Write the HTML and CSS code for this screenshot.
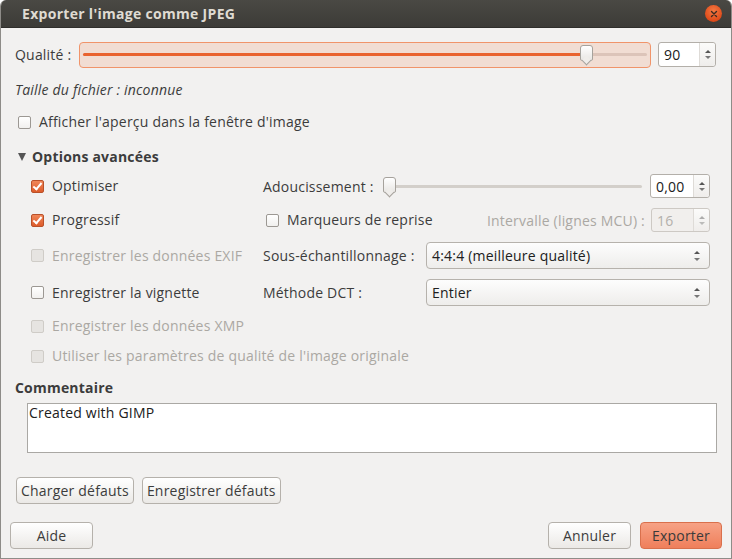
FILE: index.html
```html
<!DOCTYPE html>
<html lang="fr">
<head>
<meta charset="utf-8">
<title>Exporter l'image comme JPEG</title>
<link rel="stylesheet" href="styles.css">
</head>
<body>
<div class="window">
  <div class="titlebar">
    <span class="title">Exporter l'image comme JPEG</span>
    <span class="close"><svg width="16" height="16" viewBox="0 0 16 16"><path d="M5.5 5.5 L10.5 10.5 M10.5 5.5 L5.5 10.5" stroke="#3b2a22" stroke-width="1.4" stroke-linecap="round"/></svg></span>
  </div>
  <div class="content">
    <div class="quality-row">
      <span class="label">Qualité :</span>
      <div class="scale focused">
        <div class="trough"><div class="fill" style="width:504px"></div></div>
        <span class="thumb q-thumb"></span>
      </div>
      <div class="spin"><span class="val">90</span><span class="arrows"><i class="up"></i><i class="down"></i></span></div>
    </div>
    <div class="filesize">Taille du fichier : inconnue</div>
    <div class="check preview"><span class="box"></span><span>Afficher l'aperçu dans la fenêtre d'image</span></div>
    <div class="expander"><span class="tri"></span>Options avancées</div>
    <div class="advanced">
      <div class="check r1 c1"><span class="box checked"></span><span>Optimiser</span></div>
      <div class="r1 c2 smooth-row">
        <span class="label">Adoucissement :</span>
        <div class="scale plain">
          <div class="trough"></div>
          <span class="thumb s-thumb"></span>
        </div>
        <div class="spin"><span class="val">0,00</span><span class="arrows"><i class="up"></i><i class="down"></i></span></div>
      </div>

      <div class="check r2 c1"><span class="box checked"></span><span>Progressif</span></div>
      <div class="r2 c2 marker-row">
        <div class="check"><span class="box"></span><span>Marqueurs de reprise</span></div>
        <span class="label disabled interval">Intervalle (lignes MCU) :</span>
        <div class="spin disabled"><span class="val">16</span><span class="arrows"><i class="up"></i><i class="down"></i></span></div>
      </div>

      <div class="check disabled r3 c1"><span class="box"></span><span>Enregistrer les données EXIF</span></div>
      <div class="r3 c2 combo-row">
        <span class="label">Sous-échantillonnage :</span>
        <div class="combo"><span>4:4:4 (meilleure qualité)</span><span class="arrows"><i class="up"></i><i class="down"></i></span></div>
      </div>

      <div class="check r4 c1"><span class="box"></span><span>Enregistrer la vignette</span></div>
      <div class="r4 c2 combo-row">
        <span class="label">Méthode DCT :</span>
        <div class="combo"><span>Entier</span><span class="arrows"><i class="up"></i><i class="down"></i></span></div>
      </div>

      <div class="check disabled r5 c1"><span class="box"></span><span>Enregistrer les données XMP</span></div>
      <div class="check disabled r6 c1 wide"><span class="box"></span><span>Utiliser les paramètres de qualité de l'image originale</span></div>
    </div>
    <div class="section-title">Commentaire</div>
    <div class="textarea">Created with GIMP</div>
    <div class="defaults">
      <button class="btn">Charger défauts</button>
      <button class="btn">Enregistrer défauts</button>
    </div>
  </div>
  <div class="actions">
    <button class="btn help">Aide</button>
    <div class="right">
      <button class="btn cancel">Annuler</button>
      <button class="btn primary">Exporter</button>
    </div>
  </div>
</div>
</body>
</html>
```

FILE: styles.css
```css
html, body {
  margin: 0;
  padding: 0;
  background: #ffffff;
}
body {
  font-family: "Open Sans", "Noto Sans", "DejaVu Sans", sans-serif;
  font-size: 14px;
  letter-spacing: 0.2px;
  color: #3c3c3c;
}
.window {
  width: 732px;
  height: 559px;
  box-sizing: border-box;
  display: flex;
  flex-direction: column;
  background: #f2f1f0;
  border: 1px solid #8e8c88;
  border-top: none;
  border-radius: 6px 6px 0 0;
  overflow: hidden;
}
.titlebar {
  height: 28px;
  flex: none;
  display: flex;
  align-items: center;
  justify-content: space-between;
  padding: 0 9px 0 21px;
  background: linear-gradient(#4a4944, #3c3b37);
  border-bottom: 1px solid #2f2e2b;
  box-sizing: border-box;
}
.title {
  color: #dfdbd2;
  font-weight: bold;
  font-size: 14px;
  letter-spacing: 0.3px;
}
.close {
  width: 17px;
  height: 17px;
  border-radius: 50%;
  background: radial-gradient(circle at 50% 35%, #f47a44, #df4b1a 70%, #c23c0f);
  display: flex;
  align-items: center;
  justify-content: center;
}
.close svg { display: block; }
.content {
  flex: 1;
  padding: 14px 14px 0 14px;
}
.label { white-space: nowrap; }
.quality-row {
  display: flex;
  align-items: center;
  height: 25px;
}
.quality-row .label { width: 64px; flex: none; }
.scale { position: relative; box-sizing: border-box; }
.scale.focused {
  width: 572px;
  height: 26px;
  border: 1px solid #f0946a;
  border-radius: 4px;
  background: #f1ddd3;
}
.scale .trough {
  position: absolute;
  left: 3px;
  right: 3px;
  top: 10px;
  height: 3px;
  border-radius: 2px;
  background: #dcc4b9;
}
.scale .fill {
  height: 3px;
  border-radius: 2px;
  background: #e9632f;
}
.thumb {
  position: absolute;
  width: 11px;
  height: 14px;
  border: 1px solid #a6a29c;
  border-radius: 3px 3px 2px 2px;
  background: linear-gradient(#ffffff, #e8e6e3);
}
.thumb::after {
  content: "";
  position: absolute;
  left: 2px;
  bottom: -4px;
  width: 6px;
  height: 6px;
  background: #efedea;
  border-right: 1px solid #a6a29c;
  border-bottom: 1px solid #a6a29c;
  transform: rotate(45deg);
}
.q-thumb { left: 500px; top: 2px; }
.scale.plain {
  width: 262px;
  height: 23px;
  margin-left: 3px;
}
.scale.plain .trough { left: 3px; right: 0; top: 10px; background: #d3cfca; }
.s-thumb { left: 0; top: 2px; }
.spin {
  display: flex;
  align-items: stretch;
  box-sizing: border-box;
  height: 25px;
  border: 1px solid #b3afa9;
  border-radius: 3px;
  background: #ffffff;
  margin-left: 8px;
  flex: none;
}
.spin .val {
  flex: 1;
  display: flex;
  align-items: center;
  padding-left: 5px;
  color: #202020;
  font-size: 14px;
}
.spin .arrows {
  width: 15px;
  border-left: 1px solid #dedbd7;
  background: linear-gradient(#fbfbfa, #efedeb);
  border-radius: 0 3px 3px 0;
}
.arrows {
  display: flex;
  flex-direction: column;
  align-items: center;
  justify-content: center;
  gap: 3px;
}
.arrows i {
  display: block;
  width: 0;
  height: 0;
  border-left: 3px solid transparent;
  border-right: 3px solid transparent;
}
.arrows .up { border-bottom: 3px solid #555; }
.arrows .down { border-top: 3px solid #777; }
.quality-row .spin { width: 58px; margin-left: 7px; }
.filesize {
  margin-top: 15px;
  line-height: 16px;
  font-style: italic;
}
.check {
  display: flex;
  align-items: center;
  gap: 8px;
  line-height: 16px;
  white-space: nowrap;
}
.box {
  width: 11px;
  height: 11px;
  flex: none;
  border: 1px solid #9c9893;
  border-radius: 2px;
  background: linear-gradient(#ffffff, #f1f0ee);
  position: relative;
}
.box.checked {
  border-color: #b9512a;
  background: linear-gradient(#f08658, #dd5c2b);
}
.box.checked::after {
  content: "";
  position: absolute;
  left: 3px;
  top: 0px;
  width: 3px;
  height: 7px;
  border-right: 2px solid #ffffff;
  border-bottom: 2px solid #ffffff;
  transform: rotate(40deg);
}
.disabled { color: #aba8a3; }
.check.disabled .box {
  border-color: #cfccc7;
  background: #e6e4e1;
}
.preview {
  margin-top: 16px;
  padding-left: 3px;
}
.expander {
  margin-top: 19px;
  line-height: 16px;
  font-weight: bold;
  display: flex;
  align-items: center;
  gap: 6px;
  padding-left: 3px;
}
.tri {
  width: 0;
  height: 0;
  border-left: 4px solid transparent;
  border-right: 4px solid transparent;
  border-top: 8px solid #555;
}
.advanced {
  margin-top: 9px;
  margin-left: 16px;
  display: grid;
  grid-template-columns: 232px 447px;
  grid-template-rows: 24px 24px 27px 27px 20px 20px;
  row-gap: 10px;
  align-items: center;
}
.r1 { grid-row: 1; } .r2 { grid-row: 2; } .r3 { grid-row: 3; }
.r4 { grid-row: 4; } .r5 { grid-row: 5; } .r6 { grid-row: 6; }
.c1 { grid-column: 1; } .c2 { grid-column: 2; }
.wide { grid-column: 1 / span 2; }
.smooth-row, .marker-row, .combo-row {
  display: flex;
  align-items: center;
  height: 100%;
}
.smooth-row .label { width: 117px; flex: none; }
.smooth-row .spin { width: 60px; margin-left: 8px; height: 24px; }
.marker-row .check { padding-left: 3px; }
.marker-row .interval { margin-left: auto; }
.marker-row .spin { width: 59px; margin-left: 6px; height: 24px; }
.spin.disabled { background: #f1efed; border-color: #cdc9c4; }
.spin.disabled .val { color: #b3b0ab; }
.spin.disabled .arrows i { opacity: 0.45; }
.combo-row .label { width: 163px; flex: none; }
.combo {
  flex: 1;
  height: 27px;
  box-sizing: border-box;
  display: flex;
  align-items: center;
  justify-content: space-between;
  padding: 0 9px 0 5px;
  border: 1px solid #b6b2ac;
  border-radius: 4px;
  background: linear-gradient(#fdfdfd, #eeedeb);
  color: #202020;
}
.combo .arrows { gap: 4px; }
.section-title {
  margin-top: 14px;
  line-height: 16px;
  font-weight: bold;
}
.textarea {
  margin-top: 7px;
  margin-left: 12px;
  height: 50px;
  box-sizing: border-box;
  border: 1px solid #aaa8a4;
  background: #ffffff;
  padding: 1px 1px;
  line-height: 16px;
  color: #202020;
}
.defaults {
  margin-top: 24px;
  margin-left: 1px;
  display: flex;
  gap: 8px;
}
.btn {
  font-family: inherit;
  font-size: 14px;
  letter-spacing: 0.2px;
  color: #3c3c3c;
  height: 27px;
  box-sizing: border-box;
  padding: 0 5px;
  border: 1px solid #b5b1ab;
  border-radius: 4px;
  background: linear-gradient(#ffffff, #ebe9e6);
  margin: 0;
}
.defaults .btn { padding: 0 4px; }
.actions {
  flex: none;
  display: flex;
  justify-content: space-between;
  padding: 0 9px 9px 9px;
}
.actions .right { display: flex; gap: 9px; }
.help { width: 83px; }
.cancel { width: 83px; }
.primary {
  width: 82px;
  border-color: #d9704c;
  background: linear-gradient(#f7a285, #ef7f5b);
  color: #3a3a3a;
}
```
